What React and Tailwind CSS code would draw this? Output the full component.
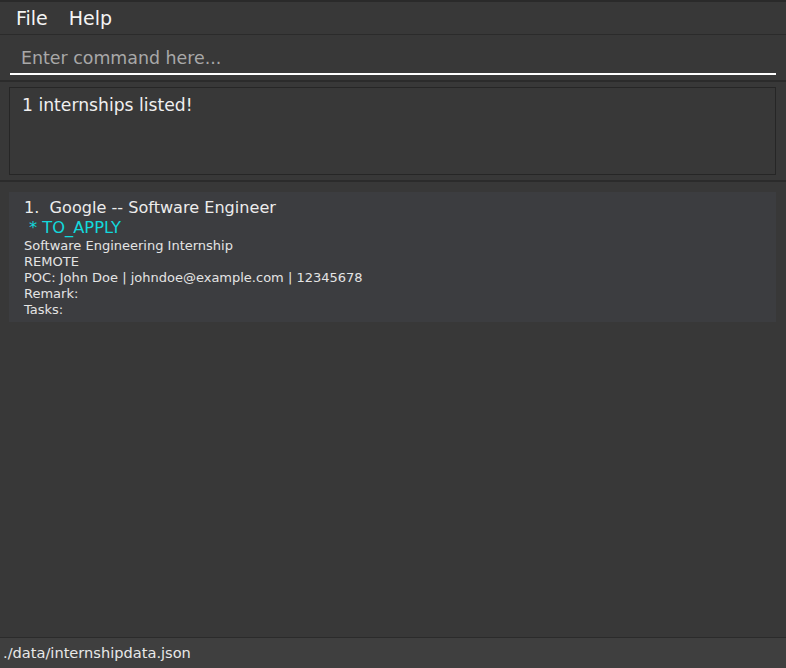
import React from "react";

const details = [
  "Software Engineering Internship",
  "REMOTE",
  "POC: John Doe | johndoe@example.com | 12345678",
  "Remark:",
  "Tasks:",
];

export default function App() {
  return (
    <div className="w-[786px] h-[668px] flex flex-col bg-[#383838] text-white font-['DejaVu_Sans',sans-serif] overflow-hidden">
      <div className="h-[2px] bg-[#2a2a2a]" />

      {/* menu bar */}
      <div className="h-[32px] flex items-center gap-[21px] pl-[16px] text-[19px] text-[#f4f4f4]">
        <span>File</span>
        <span>Help</span>
      </div>
      <div className="h-px bg-[#2b2b2b]" />

      {/* command box */}
      <div className="h-[45px] pl-[10px] pr-[10px] pt-[9px]">
        <input
          placeholder="Enter command here..."
          className="w-full h-[31px] bg-transparent border-b-2 border-white pl-[11px] pb-[2px] text-[17.4px] text-white placeholder:text-[#a8a8a8] outline-none"
        />
      </div>
      <div className="h-[2px] bg-[#2b2b2b]" />

      {/* result display */}
      <div className="h-[98px] pl-[9px] pr-[10px] pt-[5px]">
        <div className="h-[88px] border border-[#262626] pl-[12px] pt-[5px] text-[17.2px] text-[#f0f0f0]">
          1 internships listed!
        </div>
      </div>
      <div className="h-[2px] bg-[#2b2b2b]" />

      {/* internship list */}
      <div className="flex-1 pl-[9px] pr-[10px] pt-[10px]">
        <div className="h-[130px] bg-[#3c3d40] pl-[15px] pt-[6px]">
          <div className="text-[16.1px] leading-[19px] text-[#ececec]">
            1.&nbsp; Google -- Software Engineer
          </div>
          <div className="text-[16.3px] leading-[21px] text-[#12d8dc] pl-[5px]">
            * TO_APPLY
          </div>
          <div className="text-[13px] leading-[16px] text-[#e4e4e4]">
            {details.map((d) => (
              <div key={d}>{d}</div>
            ))}
          </div>
        </div>
      </div>

      {/* status bar */}
      <div className="h-[31px] border-t border-[#2b2b2b] bg-[#3f3f3f] flex items-center pl-[3px] text-[14.6px] text-[#e8e8e8]">
        ./data/internshipdata.json
      </div>
    </div>
  );
}
